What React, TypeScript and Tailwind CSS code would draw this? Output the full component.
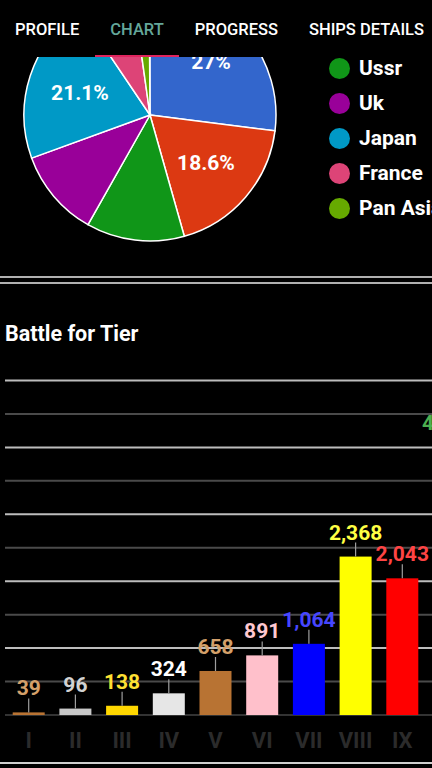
import React from 'react'

const tabs = ['PROFILE', 'CHART', 'PROGRESS', 'SHIPS DETAILS']

// pie slices, degrees clockwise from 12 o'clock
const slices = [
  { color: '#3366cc', from: 0, to: 97.2 },
  { color: '#dc3912', from: 97.2, to: 164.2 },
  { color: '#109618', from: 164.2, to: 209.5 },
  { color: '#990099', from: 209.5, to: 250 },
  { color: '#0099c6', from: 250, to: 326 },
  { color: '#dd4477', from: 326, to: 352 },
  { color: '#66aa00', from: 352, to: 359.6 },
]

const legend = [
  { name: 'Ussr', color: '#109618' },
  { name: 'Uk', color: '#990099' },
  { name: 'Japan', color: '#0099c6' },
  { name: 'France', color: '#dd4477' },
  { name: 'Pan Asia', color: '#66aa00' },
]

const tiers = [
  { tier: 'I', value: 39, bar: '#b87333', text: '#d4a06a' },
  { tier: 'II', value: 96, bar: '#c8c8c8', text: '#d2d2d2' },
  { tier: 'III', value: 138, bar: '#ffd700', text: '#ffe033' },
  { tier: 'IV', value: 324, bar: '#e6e6e6', text: '#ffffff' },
  { tier: 'V', value: 658, bar: '#b87333', text: '#d4a06a' },
  { tier: 'VI', value: 891, bar: '#ffc0cb', text: '#ffc8d0' },
  { tier: 'VII', value: 1064, bar: '#0000ff', text: '#4646ff' },
  { tier: 'VIII', value: 2368, bar: '#ffff00', text: '#ffff44' },
  { tier: 'IX', value: 2043, bar: '#ff0000', text: '#ff4444' },
]

function PieChart() {
  const cx = 150
  const cy = 58
  const r = 126
  const pt = (a: number) => {
    const rad = (a * Math.PI) / 180
    return `${cx + r * Math.sin(rad)},${cy - r * Math.cos(rad)}`
  }
  return (
    <svg width="300" height="219" className="shrink-0" style={{ fontFamily: 'Roboto, sans-serif' }}>
      {slices.map((s, i) => (
        <path
          key={i}
          d={`M${cx},${cy} L${pt(s.from)} A${r},${r} 0 ${s.to - s.from > 180 ? 1 : 0} 1 ${pt(s.to)} Z`}
          fill={s.color}
          stroke="#ffffff"
          strokeWidth="1.5"
        />
      ))}
      <g fill="#ffffff" fontWeight="700" fontSize="21" textAnchor="middle" dominantBaseline="central">
        <text x="211" y="5">27%</text>
        <text x="206" y="106">18.6%</text>
        <text x="80" y="36">21.1%</text>
      </g>
    </svg>
  )
}

function BarChart() {
  const base = 355
  const step = 33.45
  const scale = step / 500
  const grid = Array.from({ length: 10 }, (_, i) => i + 1)
  return (
    <svg width="432" height="408" style={{ fontFamily: 'Roboto, sans-serif' }}>
      {grid.map((k) => (
        <line
          key={k}
          x1="5"
          x2="432"
          y1={base - k * step}
          y2={base - k * step}
          stroke={k % 2 === 0 ? '#bdbdbd' : '#4a4a4a'}
          strokeWidth="2"
        />
      ))}
      <line x1="5" x2="432" y1={base} y2={base} stroke="#333333" strokeWidth="2" />
      {tiers.map((t, i) => {
        const x = 28.7 + i * 46.7
        const h = t.value * scale
        const top = base - h
        return (
          <g key={t.tier}>
            <rect x={x - 16} y={top} width="32" height={h} fill={t.bar} />
            <line x1={x} x2={x} y1={top} y2={top - 14} stroke="#9e9e9e" strokeWidth="1.2" />
            <text
              x={x}
              y={top - 24}
              fill={t.text}
              fontSize="21"
              fontWeight="700"
              textAnchor="middle"
              dominantBaseline="central"
            >
              {t.value.toLocaleString('en-US')}
            </text>
            <text
              x={x}
              y="380"
              fill="#2b2b2b"
              fontSize="22"
              fontWeight="700"
              textAnchor="middle"
              dominantBaseline="central"
            >
              {t.tier}
            </text>
          </g>
        )
      })}
      <text x="422" y="63" fill="#4caf50" fontSize="21" fontWeight="700" dominantBaseline="central">
        4,129
      </text>
      <line x1="0" x2="432" y1="403" y2="403" stroke="#cfcfcf" strokeWidth="2" />
    </svg>
  )
}

export default function App() {
  return (
    <div className="w-[432px] h-[768px] overflow-hidden bg-black text-white font-['Roboto',sans-serif]">
      {/* Tabs */}
      <div className="flex h-[57px] whitespace-nowrap">
        {tabs.map((tab) => (
          <div key={tab} className="relative flex items-center pt-[3px] px-[15.5px] first:pl-[15px] text-[16.5px] font-medium">
            <span className={tab === 'CHART' ? 'text-[#64a79a]' : 'text-white'}>{tab}</span>
            {tab === 'CHART' && <div className="absolute bottom-0 left-0 right-0 h-[2px] bg-[#e0245e]"></div>}
          </div>
        ))}
      </div>

      {/* Pie + legend */}
      <div className="flex h-[219px] overflow-hidden">
        <PieChart />
        <div className="flex flex-col mt-[-6px] ml-[29px] whitespace-nowrap">
          {legend.map((l) => (
            <div key={l.name} className="flex items-center h-[35px] gap-[9px]">
              <div className="w-[21px] h-[21px] rounded-full shrink-0" style={{ backgroundColor: l.color }}></div>
              <span className="text-[21px] font-bold">{l.name}</span>
            </div>
          ))}
        </div>
      </div>

      <div className="h-[2px] bg-[#b0b0b0]"></div>
      <div className="h-[4px]"></div>
      <div className="h-[2px] bg-[#b0b0b0]"></div>

      {/* Battle for Tier */}
      <div className="h-[76px] pt-[37px] pl-[5px]">
        <h2 className="text-[21.5px] leading-[26px] font-bold">Battle for Tier</h2>
      </div>
      <BarChart />
    </div>
  )
}
